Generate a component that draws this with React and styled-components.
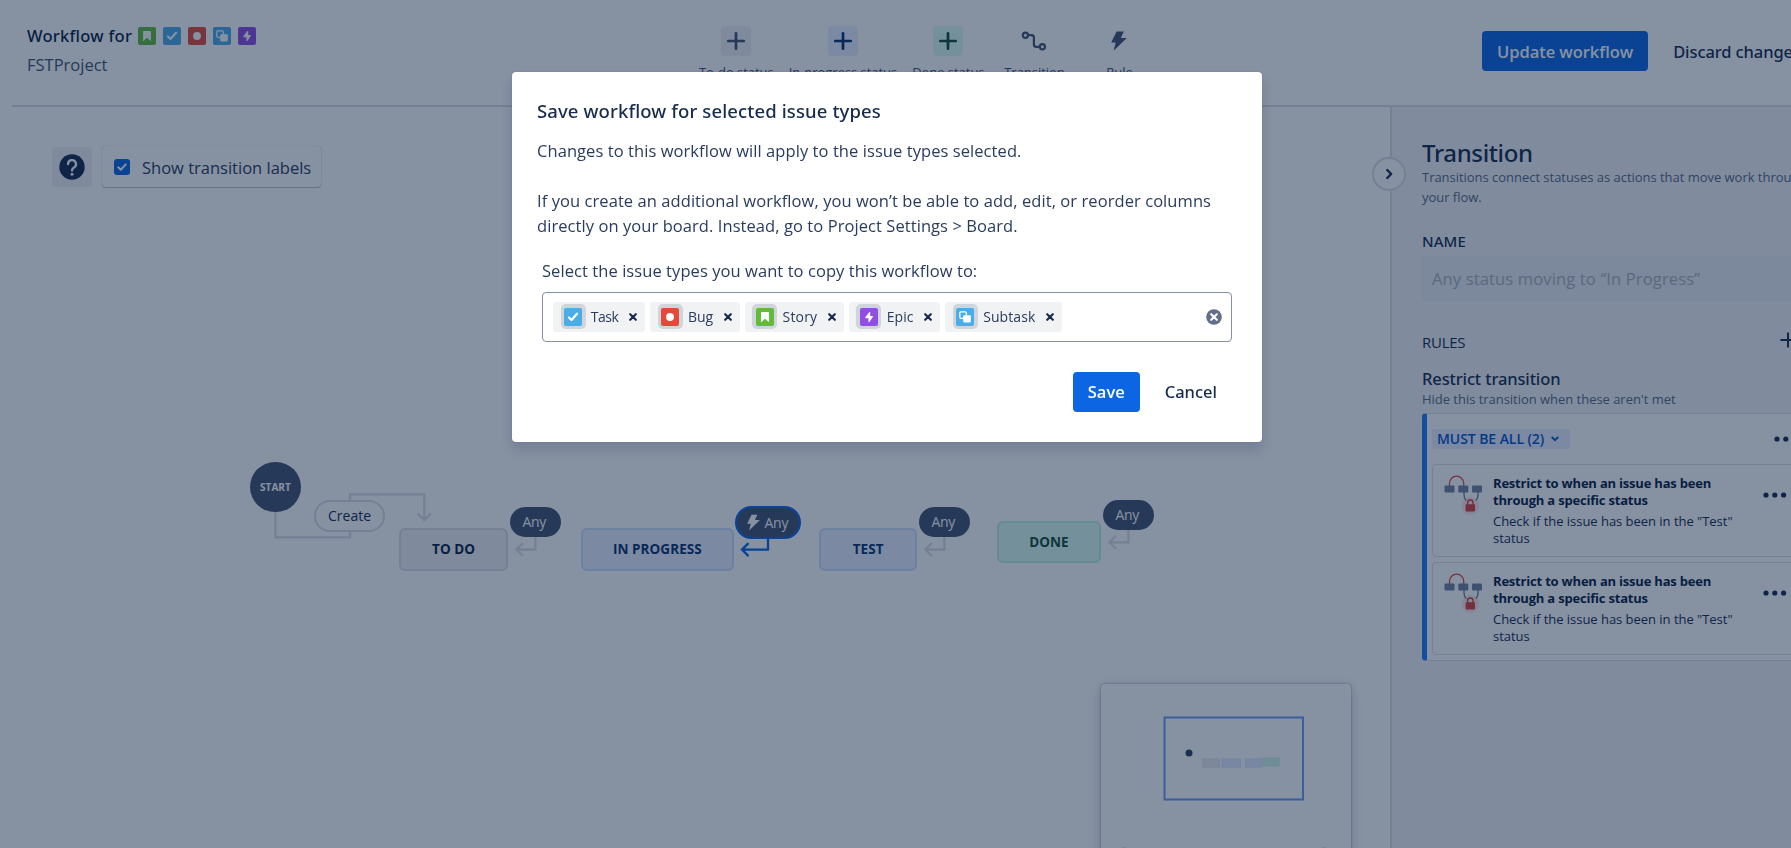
import React from 'react';
import styled, { createGlobalStyle } from 'styled-components';

const GlobalStyle = createGlobalStyle`
  * { box-sizing: border-box; }
  body {
    margin: 0;
    overflow: hidden;
    background: #fff;
    color: #172b4d;
    font-family: "Open Sans", "Noto Sans", sans-serif;
    font-size: 16.5px;
  }
  h1, h2, h3, h4, p { margin: 0; font-weight: 400; }
  button { font: inherit; color: inherit; border: 0; padding: 0; margin: 0; background: none; }
  svg { display: block; flex: none; }
`;

const medium = `font-family: "Noto Sans", "Open Sans", sans-serif; font-weight: 500;`;

/* ---------- page frame ---------- */
const Page = styled.div`
  height: 848px;
  width: 1791px;
  padding-left: 12px;
  overflow: hidden;
  display: flex;
  flex-direction: column;
`;
const Header = styled.header`
  flex: none;
  height: 107px;
  width: 1850px;
  padding-left: 15px;
  border-bottom: 2px solid #dcdfe4;
  display: grid;
  grid-template-columns: 672px 783px auto;
`;
const Heading = styled.div`
  padding-top: 22px;
  line-height: 28px;
`;
const HeadingRow = styled.h1`
  ${medium}
  display: flex;
  align-items: center;
  font-size: 16.5px;
  line-height: 28px;
  letter-spacing: 0.25px;
  color: #091e42;
`;
const TypeList = styled.div`
  display: flex;
  gap: 7px;
  margin-left: 6px;
`;
const ProjectName = styled.p`
  padding-top: 1px;
  color: #44546f;
`;
const Tools = styled.nav`
  display: flex;
  gap: 15px;
  padding-top: 26px;
`;
const Tool = styled.div`
  min-width: 70px;
  display: flex;
  flex-direction: column;
  align-items: center;
  gap: 6px;
  font-size: 13px;
  line-height: 20px;
  letter-spacing: -0.04px;
  white-space: nowrap;
  color: #44546f;
`;
const ToolIcon = styled.span`
  width: 30px;
  height: 30px;
  border-radius: 4px;
  display: grid;
  place-items: center;
  background: ${(p) => p.$bg || 'none'};
  color: ${(p) => p.$fg || '#44546f'};
`;
const HeaderActions = styled.div`
  display: flex;
  align-items: center;
  gap: 10px;
  height: 102px;
`;
const Button = styled.button`
  height: 40px;
  padding: 0 15px;
  border-radius: 4px;
  white-space: nowrap;
  ${(p) =>
    p.$primary
      ? 'background: #0c66e4; color: #fff; font-weight: 600;'
      : `${medium} color: ${p.$color || '#172b4d'};`}
  letter-spacing: ${(p) => p.$ls || 0}px;
`;
const Body = styled.main`
  flex: 1;
  display: flex;
  min-height: 0;
`;

/* ---------- canvas ---------- */
const Canvas = styled.section`
  position: relative;
  flex: none;
  width: 1378px;
  padding: 39px 0 0 40px;
`;
const CanvasTools = styled.div`
  display: flex;
  gap: 10px;
  align-items: center;
`;
const HelpButton = styled.button`
  width: 40px;
  height: 40px;
  border-radius: 4px;
  display: grid;
  place-items: center;
  background: rgba(9, 30, 66, 0.06);
`;
const ToggleCard = styled.label`
  display: flex;
  align-items: center;
  height: 41px;
  width: 219px;
  padding-left: 12px;
  gap: 12px;
  border-radius: 4px;
  color: #2a3c5e;
  box-shadow: 0 1px 1px rgba(9, 30, 66, 0.25), 0 0 1px rgba(9, 30, 66, 0.31);
  span { padding-top: 2px; }
`;
const Diagram = styled.div`
  position: absolute;
  inset: 0;
  pointer-events: none;
`;
const Wires = styled.svg`
  position: absolute;
  left: 0;
  top: 0;
`;
const Node = styled.div`
  position: absolute;
  left: ${(p) => p.$x}px;
  top: ${(p) => p.$y}px;
  width: ${(p) => p.$w}px;
  height: ${(p) => p.$h}px;
  display: flex;
  align-items: center;
  justify-content: center;
  white-space: nowrap;
`;
const StartNode = styled(Node)`
  border-radius: 50%;
  background: #44546f;
  color: #fff;
  font-size: 10px;
  font-weight: 700;
`;
const LabelNode = styled(Node)`
  border-radius: 17px;
  background: #fff;
  border: 2.3px solid #dcdfe4;
  color: #172b4d;
  font-size: 14px;
  padding-bottom: 2px;
`;
const AnyNode = styled(Node)`
  border-radius: 17px;
  background: #44546f;
  color: #fff;
  font-size: 14px;
  letter-spacing: -0.3px;
  gap: 5px;
  padding-right: 3px;
  padding-bottom: 1px;
  padding-left: ${(p) => (p.$active ? 2 : 0)}px;
  ${(p) => p.$active && 'border: 2.4px solid #0c66e4;'}
`;
const tones = {
  todo: ['#f1f2f5', '#dcdfe4', '#091e42'],
  progress: ['#e9efff', '#cce0ff', '#09326c'],
  done: ['#dcfff1', '#baf3db', '#164b35'],
};
const StatusNode = styled(Node)`
  border-radius: 6px;
  border: 2.4px solid ${(p) => tones[p.$tone][1]};
  background: ${(p) => tones[p.$tone][0]};
  color: ${(p) => tones[p.$tone][2]};
  font-size: 13.5px;
  font-weight: 700;
  letter-spacing: 0.05px;
  padding-bottom: 1px;
`;
const MiniMap = styled.div`
  position: absolute;
  left: 1088.5px;
  top: 576.5px;
  width: 250.5px;
  height: 200px;
  border-radius: 3px;
  background: #fff;
  box-shadow: 0 8px 12px rgba(9, 30, 66, 0.15), 0 0 8px rgba(9, 30, 66, 0.12), 0 0 1.5px rgba(9, 30, 66, 0.6);
`;
const CollapseButton = styled.button`
  position: absolute;
  left: 1360.3px;
  top: 50px;
  width: 34px;
  height: 34px;
  border-radius: 50%;
  border: 2px solid #dcdfe4;
  background: #fff;
  display: grid;
  place-items: center;
  z-index: 1;
`;

/* ---------- side panel ---------- */
const Panel = styled.aside`
  flex: none;
  width: 450px;
  padding: 32px 0 0 30px;
  border-left: 2px solid #dcdfe4;
  background: #f4f5f8;
`;
const PanelTitle = styled.h2`
  ${medium}
  font-size: 24px;
  line-height: 28px;
  letter-spacing: -0.35px;
`;
const Hint = styled.p`
  width: 390px;
  font-size: 13px;
  line-height: 20px;
  letter-spacing: -0.03px;
  color: #5a6882;
`;
const NameLabel = styled.h3`
  ${medium}
  margin-top: 23.5px;
  font-size: 15px;
  line-height: 20px;
  letter-spacing: 0.05px;
`;
const NameInput = styled.div`
  margin-top: 5.5px;
  width: 390px;
  height: 45px;
  padding-left: 10px;
  line-height: 46px;
  background: rgba(9, 30, 66, 0.035);
  color: #a9b1be;
  letter-spacing: 0.15px;
`;
const RulesHeader = styled.div`
  margin-top: 30.5px;
  height: 20px;
  width: 374px;
  display: flex;
  justify-content: space-between;
  h3 { font-size: 15px; line-height: 20px; letter-spacing: -0.25px; }
`;
const SectionTitle = styled.h3`
  ${medium}
  margin: 17px 0 0;
  font-size: 16.5px;
  line-height: 20px;
  letter-spacing: -0.13px;
`;
const RuleGroup = styled.div`
  margin-top: 4.5px;
  width: 400px;
  height: 248px;
  padding: 15px 0 0 5px;
  border: 1px solid #dcdfe4;
  border-left: 5px solid #1d7afc;
  border-radius: 4px;
  background: #fff;
`;
const GroupHeader = styled.div`
  display: flex;
  align-items: center;
  justify-content: space-between;
  width: 366px;
  margin-bottom: 15px;
`;
const Lozenge = styled.button`
  display: flex;
  align-items: center;
  gap: 7px;
  width: 138px;
  height: 20px;
  padding-left: 5px;
  border-radius: 3px;
  background: #e9efff;
  color: #0055cc;
  font-size: 14px;
  font-weight: 600;
  line-height: 20px;
  letter-spacing: -0.07px;
  white-space: nowrap;
`;
const RuleCard = styled.article`
  display: flex;
  height: 92.5px;
  width: 385px;
  margin-bottom: 5.5px;
  padding: 10px 0 0 11px;
  border: 1px solid #dcdfe4;
  border-radius: 4px;
`;
const RuleText = styled.div`
  width: 270px;
  margin-left: 10px;
  padding-right: 20px;
  font-size: 13px;
  line-height: 17px;
  letter-spacing: -0.03px;
  h4 {
    font-weight: 700;
    margin-bottom: 4px;
    letter-spacing: -0.2px;
    color: #091e42;
  }
`;
const CardMenu = styled.div`
  padding-top: 17px;
`;

/* ---------- dialog ---------- */
const Blanket = styled.div`
  position: fixed;
  inset: 0;
  padding: 72px 17px 0 0;
  display: flex;
  justify-content: center;
  align-items: flex-start;
  background: rgba(9, 30, 66, 0.49);
  z-index: 10;
`;
const Dialog = styled.div`
  width: 750px;
  height: 370px;
  padding: 25.5px 25px 0;
  border-radius: 4px;
  background: #fff;
  line-height: 25px;
  box-shadow: 0 8px 12px rgba(9, 30, 66, 0.15), 0 0 1px rgba(9, 30, 66, 0.31);
`;
const DialogTitle = styled.h2`
  ${medium}
  font-size: 18.5px;
  line-height: 25px;
  letter-spacing: 0.12px;
  margin-bottom: 15px;
`;
const Paragraph = styled.p`
  color: #2a3c5e;
  letter-spacing: 0.07px;
  margin-bottom: ${(p) => p.$gap}px;
`;
const Field = styled.div`
  padding: 0 5px;
`;
const Select = styled.div`
  margin-top: 9px;
  height: 50px;
  padding: 0 9px 0 10px;
  display: flex;
  align-items: center;
  gap: 5px;
  border: 1px solid #8590a2;
  border-radius: 4px;
`;
const Tag = styled.div`
  display: flex;
  align-items: center;
  height: 30px;
  padding: 0 8px 0 7.5px;
  border-radius: 3px;
  background: #f1f2f4;
  color: #2a3c5e;
  font-size: 14px;
  span { margin: 0 10.8px 0 5.2px; letter-spacing: ${(p) => p.$ls || 0}px; }
`;
const TagAvatar = styled.div`
  width: 25px;
  height: 25px;
  border-radius: 5px;
  display: grid;
  place-items: center;
  background: #d0d5dc;
`;
const ClearButton = styled.button`
  margin-left: auto;
`;
const DialogActions = styled.div`
  display: flex;
  justify-content: flex-end;
  gap: 10px;
  margin-top: 30px;
  padding-right: 5px;
`;

/* ---------- drawings ---------- */
const typeArt = {
  story: ['#63ba3c', <path key="a" d="M4.5 4.2c0-.4.2-.6.6-.6h5.8c.4 0 .6.2.6.6v8.4L8 9.6l-3.500 3z" fill="#fff" />],
  task: ['#4bade8', <path key="a" d="M4.4 8.4l2.3 2.3 4.900-5.600" fill="none" stroke="#fff" strokeWidth="1.9" strokeLinecap="round" strokeLinejoin="round" />],
  bug: ['#e5493a', <circle key="a" cx="8" cy="8" r="3.5" fill="#fff" />],
  subtask: [
    '#4bade8',
    <g key="a">
      <rect x="3.4" y="3.4" width="5.8" height="5.8" rx="0.9" fill="none" stroke="#fff" strokeWidth="1.1" />
      <rect x="6.4" y="6.4" width="6.8" height="6.4" rx="1" fill="#fff" />
    </g>,
  ],
  epic: ['#904ee2', <path key="a" d="M8.4 3.6L4.7 8.3c-.2.3 0 .7.3.7h2.5v3.3c0 .5.5.6.8.2l3.1-4.600c.2-.3 0-.7-.4-.7H9.100V3.900c0-.4-.4-.6-.7-.3z" fill="#fff" />],
};
const TypeIcon = ({ type }) => (
  <svg width="18" height="18" viewBox="0 0 16 16">
    <rect width="16" height="16" rx="1.8" fill={typeArt[type][0]} />
    {typeArt[type][1]}
  </svg>
);
const Plus = ({ size = 18, stroke = 2.7 }) => (
  <svg width={size} height={size} viewBox="0 0 18 18" stroke="currentColor" strokeWidth={stroke} strokeLinecap="round">
    <path d="M9 1.300v15.400M1.300 9h15.400" />
  </svg>
);
const Bolt = ({ w = 16, h = 20 }) => (
  <svg width={w} height={h} viewBox="0 0 16 20" fill="currentColor">
    <path d="M5.6.5h7.2L9.8 7h6.1L2.6 19.8 4.7 11.5H.2z" />
  </svg>
);
const Route = () => (
  <svg width="26" height="20" viewBox="0 0 26 20" fill="none" stroke="currentColor" strokeWidth="2.200">
    <circle cx="4.4" cy="4.2" r="2.6" />
    <circle cx="21.4" cy="15.8" r="2.6" />
    <path d="M7 4.2h3.6q2.3 0 2.3 2.3v7q0 2.3 2.3 2.3h3.6" />
  </svg>
);
const Dots = () => (
  <svg width="24" height="6" viewBox="0 0 24 6" fill="#172b4d">
    <circle cx="3" cy="3" r="2.6" />
    <circle cx="11.8" cy="3" r="2.6" />
    <circle cx="20.6" cy="3" r="2.6" />
  </svg>
);
const TagCross = () => (
  <svg width="8" height="8" viewBox="0 0 8 8" stroke="#172b4d" strokeWidth="2.1" strokeLinecap="round">
    <path d="M1.2 1.2l5.6 5.6M6.8 1.2L1.2 6.8" />
  </svg>
);
const RestrictArt = () => (
  <svg width="39" height="40" viewBox="0 0 39 40">
    <path d="M5.5 11V8.2a7 7 0 0 1 14.2 0V11" fill="none" stroke="#e34935" strokeWidth="1.3" />
    <path d="M20 17v3q.1 3.500 2 5.500M34 17v3q-.1 3.500-2 5.500" fill="none" stroke="#6b778c" strokeWidth="1.3" />
    <g fill="#7083a0">
      <rect x="0.500" y="10.500" width="10" height="7" rx="1" />
      <rect x="14.300" y="10.500" width="10" height="7" rx="1" />
      <rect x="28" y="10.500" width="10" height="7" rx="1" />
    </g>
    <circle cx="26.300" cy="31" r="8.700" fill="#e34935" opacity="0.13" />
    <path d="M23.600 30v-2.300a2.700 2.700 0 0 1 5.400 0V30" fill="none" stroke="#d93f35" strokeWidth="1.400" />
    <rect x="21.600" y="29.200" width="9.400" height="7.200" rx="0.800" fill="#d93f35" />
  </svg>
);

const Hook = ({ x, y, dx = 20, color = '#dcdfe4' }) => (
  <path
    d={`M${x + dx} ${y - 14}V${y}H${x + 1}M${x + 7.5} ${y - 6.5}L${x + 1} ${y}l6.5 6.5`}
    fill="none"
    stroke={color}
    strokeWidth="2.3"
  />
);

const anyNodes = [
  { x: 498.4, y: 400 },
  { x: 907.4, y: 400 },
  { x: 1091.4, y: 392.8 },
];
const statuses = [
  { name: 'TO DO', tone: 'todo', x: 387.3, y: 421.4, w: 108.7 },
  { name: 'IN PROGRESS', tone: 'progress', x: 568.7, y: 421.4, w: 153.3 },
  { name: 'TEST', tone: 'progress', x: 807.3, y: 421.4, w: 97.7 },
  { name: 'DONE', tone: 'done', x: 985, y: 414, w: 104 },
];
const tags = [
  { type: 'task', name: 'Task', ls: -0.45 },
  { type: 'bug', name: 'Bug', ls: 0 },
  { type: 'story', name: 'Story', ls: 0.15 },
  { type: 'epic', name: 'Epic', ls: 0.1 },
  { type: 'subtask', name: 'Subtask', ls: 0.1 },
];

const Rule = () => (
  <RuleCard>
    <RestrictArt />
    <RuleText>
      <h4>Restrict to when an issue has been through a specific status</h4>
      <p>Check if the issue has been in the "Test" status</p>
    </RuleText>
    <CardMenu><Dots /></CardMenu>
  </RuleCard>
);

export default function App() {
  return (
    <>
      <GlobalStyle />
      <Page>
        <Header>
          <Heading>
            <HeadingRow>
              Workflow for
              <TypeList>
                {['story', 'task', 'bug', 'subtask', 'epic'].map((t) => <TypeIcon key={t} type={t} />)}
              </TypeList>
            </HeadingRow>
            <ProjectName>FSTProject</ProjectName>
          </Heading>
          <Tools>
            <Tool><ToolIcon $bg="#f1f2f5"><Plus /></ToolIcon>To-do status</Tool>
            <Tool><ToolIcon $bg="#e9efff" $fg="#09326c"><Plus /></ToolIcon>In-progress status</Tool>
            <Tool><ToolIcon $bg="#dcfff1" $fg="#164b35"><Plus /></ToolIcon>Done status</Tool>
            <Tool><ToolIcon><Route /></ToolIcon>Transition</Tool>
            <Tool><ToolIcon><Bolt /></ToolIcon>Rule</Tool>
          </Tools>
          <HeaderActions>
            <Button $primary $ls={-0.05}>Update workflow</Button>
            <Button $ls={-0.1}>Discard changes</Button>
          </HeaderActions>
        </Header>
        <Body>
          <Canvas>
            <CanvasTools>
              <HelpButton aria-label="Help">
                <svg width="26" height="26" viewBox="0 0 26 26">
                  <circle cx="13" cy="13" r="12.7" fill="#172b4d" />
                  <path d="M9 10.2a4 4 0 1 1 6 3.4c-1.4.8-2 1.4-2 2.9" fill="none" stroke="#fff" strokeWidth="2.3" strokeLinecap="round" />
                  <circle cx="13" cy="20.2" r="1.5" fill="#fff" />
                </svg>
              </HelpButton>
              <ToggleCard>
                <svg width="16" height="16" viewBox="0 0 16 16">
                  <rect width="16" height="16" rx="3" fill="#0c66e4" />
                  <path d="M4.200 8.200l2.600 2.500 5-5.300" fill="none" stroke="#fff" strokeWidth="2" strokeLinecap="round" strokeLinejoin="round" />
                </svg>
                <span>Show transition labels</span>
              </ToggleCard>
            </CanvasTools>
            <Diagram>
              <Wires width="1378" height="741">
                <path d="M263.5 400v30.3H338V420M338 398v-10.7h74.3V413M405.8 406.5l6.5 6.5 6.5-6.5" fill="none" stroke="#dcdfe4" strokeWidth="2.3" />
                {anyNodes.map((n) => <Hook key={n.x} x={n.x + 5} y={n.y + 42.5} />)}
                <Hook x={729} y={442.6} dx={27} color="#0c66e4" />
              </Wires>
              <StartNode $x={238.2} $y={355} $w={50.4} $h={50.4}>START</StartNode>
              <LabelNode $x={302.3} $y={393} $w={70.5} $h={32}>Create</LabelNode>
              {statuses.map((s) => (
                <StatusNode key={s.name} $tone={s.tone} $x={s.x} $y={s.y} $w={s.w} $h={42.4}>{s.name}</StatusNode>
              ))}
              {anyNodes.map((n) => (
                <AnyNode key={n.x} $x={n.x} $y={n.y} $w={50.6} $h={30.2}>Any</AnyNode>
              ))}
              <AnyNode $active $x={723} $y={399} $w={65.7} $h={33}><Bolt w={13} h={17} />Any</AnyNode>
            </Diagram>
            <MiniMap>
              <svg width="250" height="165" viewBox="0 0 250 165">
                <rect x="63.5" y="33.500" width="138.500" height="82" fill="none" stroke="#6a9df0" strokeWidth="2" />
                <circle cx="88" cy="69" r="3.500" fill="#2c3e5d" />
                <rect x="102" y="75" width="16.500" height="8" fill="#eeeff2" stroke="#e4e6ea" />
                <rect x="121" y="75" width="18.500" height="8" fill="#e4ecff" stroke="#d6e4ff" />
                <rect x="144.500" y="75" width="16" height="8" fill="#e4ecff" stroke="#d6e4ff" />
                <rect x="162" y="74" width="16" height="8" fill="#d3f7e8" stroke="#c4f3de" />
                <path d="M22 164.200h3M222 164.200h3" stroke="#8590a2" />
              </svg>
            </MiniMap>
            <CollapseButton aria-label="Collapse panel">
              <svg width="10" height="12" viewBox="0 0 10 12" fill="none" stroke="#172b4d" strokeWidth="2.4" strokeLinecap="round" strokeLinejoin="round">
                <path d="M3.200 2l4 4-4 4" />
              </svg>
            </CollapseButton>
          </Canvas>
          <Panel>
            <PanelTitle>Transition</PanelTitle>
            <Hint>Transitions connect statuses as actions that move work through your flow.</Hint>
            <NameLabel>NAME</NameLabel>
            <NameInput>Any status moving to “In Progress”</NameInput>
            <RulesHeader>
              <h3>RULES</h3>
              <Plus size={16} stroke={2.2} />
            </RulesHeader>
            <SectionTitle>Restrict transition</SectionTitle>
            <Hint>Hide this transition when these aren't met</Hint>
            <RuleGroup>
              <GroupHeader>
                <Lozenge>
                  MUST BE ALL (2)
                  <svg width="8" height="6" viewBox="0 0 8 6" fill="none" stroke="#0055cc" strokeWidth="1.9" strokeLinecap="round" strokeLinejoin="round">
                    <path d="M1.300 1.500L4 4.200l2.700-2.700" />
                  </svg>
                </Lozenge>
                <Dots />
              </GroupHeader>
              <Rule />
              <Rule />
            </RuleGroup>
          </Panel>
        </Body>
      </Page>
      <Blanket>
        <Dialog role="dialog">
          <DialogTitle>Save workflow for selected issue types</DialogTitle>
          <Paragraph $gap={25}>Changes to this workflow will apply to the issue types selected.</Paragraph>
          <Paragraph $gap={20}>
            If you create an additional workflow, you won’t be able to add, edit, or reorder columns directly on your
            board. Instead, go to Project Settings &gt; Board.
          </Paragraph>
          <Field>
            <Paragraph $gap={0}>Select the issue types you want to copy this workflow to:</Paragraph>
            <Select>
              {tags.map((t) => (
                <Tag key={t.type} $ls={t.ls}>
                  <TagAvatar><TypeIcon type={t.type} /></TagAvatar>
                  <span>{t.name}</span>
                  <TagCross />
                </Tag>
              ))}
              <ClearButton aria-label="Clear">
                <svg width="16" height="16" viewBox="0 0 16 16">
                  <circle cx="8" cy="8" r="7.8" fill="#626f86" />
                  <path d="M5.200 5.200l5.600 5.600M10.800 5.200l-5.600 5.600" stroke="#fff" strokeWidth="2.1" strokeLinecap="round" />
                </svg>
              </ClearButton>
            </Select>
          </Field>
          <DialogActions>
            <Button $primary>Save</Button>
            <Button>Cancel</Button>
          </DialogActions>
        </Dialog>
      </Blanket>
    </>
  );
}
